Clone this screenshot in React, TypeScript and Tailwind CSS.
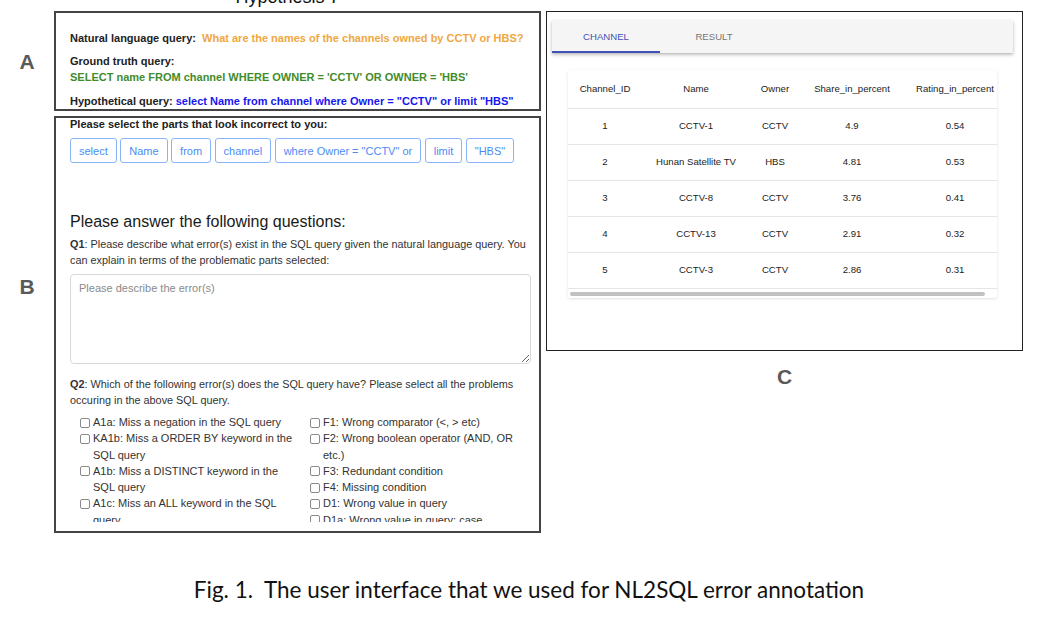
import React from 'react'

const rows = [
  ['1', 'CCTV-1', 'CCTV', '4.9', '0.54'],
  ['2', 'Hunan Satellite TV', 'HBS', '4.81', '0.53'],
  ['3', 'CCTV-8', 'CCTV', '3.76', '0.41'],
  ['4', 'CCTV-13', 'CCTV', '2.91', '0.32'],
  ['5', 'CCTV-3', 'CCTV', '2.86', '0.31'],
]

const colW = ['w-[74px]', 'w-[108px]', 'w-[50px]', 'w-[104px]', 'w-[102px]']

const parts = ['select', 'Name', 'from', 'channel', 'where Owner = "CCTV" or', 'limit', '"HBS"']

const leftErrors = [
  'A1a: Miss a negation in the SQL query',
  'KA1b: Miss a ORDER BY keyword in the SQL query',
  'A1b: Miss a DISTINCT keyword in the SQL query',
  'A1c: Miss an ALL keyword in the SQL query',
]

const rightErrors = [
  'F1: Wrong comparator (<, > etc)',
  'F2: Wrong boolean operator (AND, OR etc.)',
  'F3: Redundant condition',
  'F4: Missing condition',
  'D1: Wrong value in query',
  'D1a: Wrong value in query: case',
]

function Check({ label }: { label: string }) {
  return (
    <div className="flex items-start gap-[3px]">
      <span className="mt-[3.5px] w-[10px] h-[10px] shrink-0 border border-[#8a8a8a] rounded-[2px] bg-white" />
      <span>{label}</span>
    </div>
  )
}

export default function App() {
  return (
    <div className="w-[1058px] h-[622px] bg-white overflow-hidden font-['Liberation_Sans',Arial,sans-serif] text-[#222]">
      <div className="flex items-start">
        {/* left side: panels A and B */}
        <div className="flex flex-col w-[541px]">
          <div className="h-[11px] ml-[54px] flex items-end justify-center pr-[20px]">
            <span className="text-[18px] leading-[18px] text-[#111] translate-y-[-5px]">Hypothesis 7</span>
          </div>
          <div className="flex">
            <div className="w-[54px] flex items-center justify-center pt-[2px] text-[21px] font-bold text-[#5a5a5a]">A</div>
            <div className="w-[487px] h-[100px] border-2 border-[#444] pl-[14px] pt-[17px] text-[11px] leading-[16px] font-bold overflow-hidden">
              <div>
                Natural language query:{'\u00a0\u00a0'}
                <span className="text-[#f0a742]">What are the names of the channels owned by CCTV or HBS?</span>
              </div>
              <div className="mt-[7px]">Ground truth query:</div>
              <div className="text-[#3f8c2b]">SELECT name FROM channel WHERE OWNER = 'CCTV' OR OWNER = 'HBS'</div>
              <div className="mt-[8px]">
                Hypothetical query:{' '}
                <span className="text-[#1616ee]">select Name from channel where Owner = "CCTV" or limit "HBS"</span>
              </div>
            </div>
          </div>
          <div className="flex mt-[5px]">
            <div className="w-[54px] pt-[155px] text-center text-[21px] font-bold text-[#5a5a5a]">B</div>
            <div className="w-[487px] h-[417px] border-2 border-[#444] pl-[14px] pr-[6px]">
              <div className="h-[404px] overflow-hidden text-[11px] leading-[16px]">
                <div className="font-bold leading-[13px]">Please select the parts that look incorrect to you:</div>
                <div className="flex gap-[3.5px] mt-[7px]">
                  {parts.map((p) => (
                    <button
                      key={p}
                      className="h-[25px] px-[8px] border border-[#8ab4f8] rounded-[3px] text-[#4b8cf4] text-[11px] bg-white"
                    >
                      {p}
                    </button>
                  ))}
                </div>
                <div className="mt-[49px] text-[16px] leading-[20px] text-[#1a1a1a]">Please answer the following questions:</div>
                <p className="mt-[4px] pr-[2px] text-[#333] text-[10.85px]">
                  <b>Q1</b>: Please describe what error(s) exist in the SQL query given the natural language query. You can explain in terms of the problematic parts selected:
                </p>
                <textarea
                  placeholder="Please describe the error(s)"
                  className="mt-[6px] block w-[461px] h-[90px] border border-[#d8d8d8] rounded-[4px] px-[8px] py-[5px] text-[11px] placeholder:text-[#8a8a8a] outline-none resize-y"
                />
                <p className="mt-[12px] text-[#333] text-[10.85px]">
                  <b>Q2</b>: Which of the following error(s) does the SQL query have? Please select all the problems occuring in the above SQL query.
                </p>
                <div className="mt-[6px] pl-[10px] flex text-[#333] leading-[16.3px]">
                  <div className="w-[230px] pr-[12px] flex flex-col">
                    {leftErrors.map((e) => (
                      <Check key={e} label={e} />
                    ))}
                  </div>
                  <div className="flex-1 flex flex-col">
                    {rightErrors.map((e) => (
                      <Check key={e} label={e} />
                    ))}
                  </div>
                </div>
              </div>
            </div>
          </div>
        </div>

        {/* right side: panel C */}
        <div className="ml-[5px] flex flex-col w-[477px]">
          <div className="h-[11px]" />
          <div className="h-[340px] border border-[#222] pt-[8px] pl-[5px]">
            <div className="w-[461px] h-[33px] bg-[#f5f5f5] flex shadow-[0_2px_4px_rgba(0,0,0,0.2),0_1px_2px_rgba(0,0,0,0.12)]">
              <div className="w-[108px] h-full flex items-center justify-center text-[9.6px] text-[#3f51b5] border-b-2 border-[#3f51b5] pt-[3px]">
                CHANNEL
              </div>
              <div className="w-[108px] h-full flex items-center justify-center text-[9.6px] text-[#777] pt-[1px]">RESULT</div>
            </div>
            <div className="ml-[16px] mt-[17px] w-[429px] bg-white overflow-hidden shadow-[0_1px_3px_rgba(0,0,0,0.12)] rounded-[2px]">
              <div className="w-[438px] text-[9.6px] text-[#222]">
                <div className="flex h-[39px] items-center border-b border-[#e6e6e6]">
                  {['Channel_ID', 'Name', 'Owner', 'Share_in_percent', 'Rating_in_percent'].map((h, i) => (
                    <div key={h} className={`${colW[i]} text-center whitespace-nowrap`}>
                      {h}
                    </div>
                  ))}
                </div>
                {rows.map((r) => (
                  <div key={r[0]} className="flex h-[36px] items-center border-b border-[#e6e6e6]">
                    {r.map((c, i) => (
                      <div key={i} className={`${colW[i]} text-center whitespace-nowrap`}>
                        {c}
                      </div>
                    ))}
                  </div>
                ))}
              </div>
              <div className="h-[9px] pt-[3px] pl-[2px]">
                <div className="w-[415px] h-[4px] rounded-full bg-[#c1c1c1]" />
              </div>
            </div>
          </div>
          <div className="mt-[14px] text-center text-[21px] font-bold text-[#5a5a5a] leading-[24px]">C</div>
        </div>
      </div>

      <div className="mt-[44px] text-center text-[22.5px] leading-[26px] text-[#111] font-['Lato',sans-serif]">
        Fig. 1.{'\u00a0\u00a0'}The user interface that we used for NL2SQL error annotation
      </div>
    </div>
  )
}
